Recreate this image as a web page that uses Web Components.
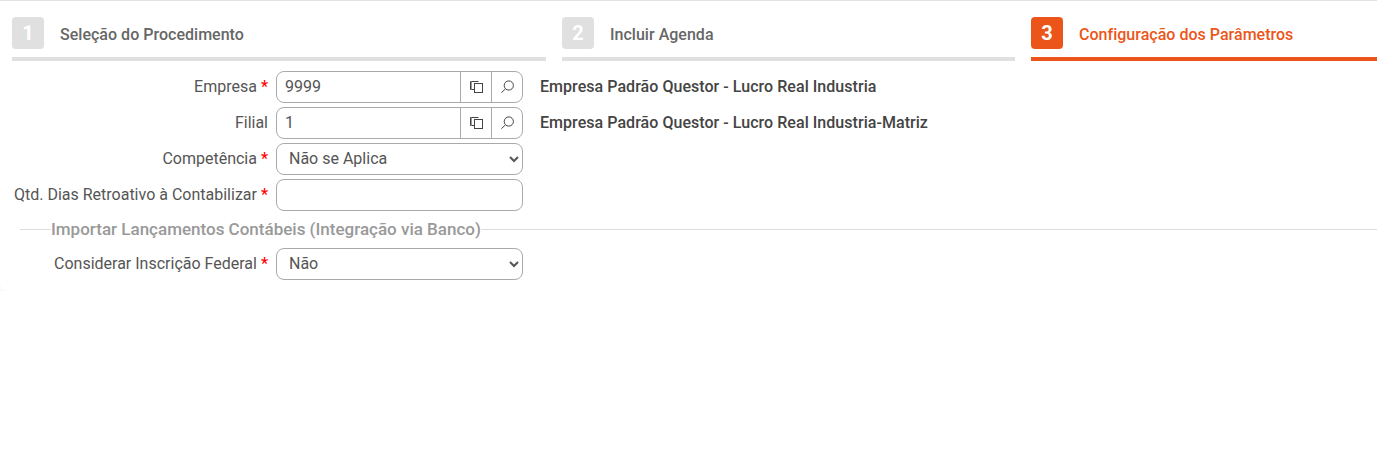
<!DOCTYPE html>
<html lang="pt-BR">
<head>
<meta charset="utf-8">
<title>Configuração dos Parâmetros</title>
<style>
	html, body { margin: 0; background: #fff; }
	body { font-family: Roboto, "Liberation Sans", sans-serif; color: #555; }
</style>
</head>
<body>
<wizard-panel>
	<wizard-steps>
		<wizard-step number="1" style="flex: 534 0 0">Seleção do Procedimento</wizard-step>
		<wizard-step number="2" style="flex: 453 0 0">Incluir Agenda</wizard-step>
		<wizard-step number="3" active style="flex: 346 0 0">Configuração dos Parâmetros</wizard-step>
	</wizard-steps>
	<form-row label="Empresa" required>
		<lookup-field value="9999"></lookup-field>
		<span slot="info">Empresa Padrão Questor - Lucro Real Industria</span>
	</form-row>
	<form-row label="Filial">
		<lookup-field value="1"></lookup-field>
		<span slot="info">Empresa Padrão Questor - Lucro Real Industria-Matriz</span>
	</form-row>
	<form-row label="Competência" required>
		<select-field value="Não se Aplica"></select-field>
	</form-row>
	<form-row label="Qtd. Dias Retroativo à Contabilizar" required>
		<text-field></text-field>
	</form-row>
	<section-title>Importar Lançamentos Contábeis (Integração via Banco)</section-title>
	<form-row label="Considerar Inscrição Federal" required>
		<select-field value="Não"></select-field>
	</form-row>
</wizard-panel>

<script>
const fieldBox = `
	box-sizing: border-box;
	height: 32px;
	border: 1px solid #aaa;
	border-radius: 8px;
	background: #fff;
	color: #555;
	font: 16px Roboto, "Liberation Sans", sans-serif;
`;

customElements.define('wizard-panel', class extends HTMLElement {
	constructor() {
		super();
		this.attachShadow({ mode: 'open' }).innerHTML = `
			<style>
				:host {
					display: flex;
					flex-direction: column;
					box-sizing: border-box;
					height: 291px;
					border-top: 1px solid #e2e2e2;
					border-radius: 0 0 0 8px;
					box-shadow: 0 3px 4px rgba(0, 0, 0, .035);
				}
			</style>
			<slot></slot>
		`;
	}
});

customElements.define('wizard-steps', class extends HTMLElement {
	constructor() {
		super();
		this.attachShadow({ mode: 'open' }).innerHTML = `
			<style>
				:host {
					display: flex;
					gap: 16px;
					padding: 16px 0 0 12px;
					margin-bottom: 10px;
				}
			</style>
			<slot></slot>
		`;
	}
});

customElements.define('wizard-step', class extends HTMLElement {
	constructor() {
		super();
		this.attachShadow({ mode: 'open' }).innerHTML = `
			<style>
				:host {
					display: flex;
					align-items: center;
					gap: 16px;
					box-sizing: border-box;
					height: 44px;
					padding-bottom: 8px;
					border-bottom: 4px solid #e0e0e0;
					color: #666;
					font-size: 16px;
					font-weight: 500;
				}
				:host([active]) {
					border-bottom-color: #ec5519;
					color: #ec5519;
				}
				.badge {
					display: flex;
					align-items: center;
					justify-content: center;
					width: 32px;
					height: 32px;
					border-radius: 4px;
					background: #e0e0e0;
					color: #fff;
					font-size: 20px;
					font-weight: 700;
				}
				:host([active]) .badge {
					background: #ec5519;
				}
				.title {
					padding-top: 2px;
					letter-spacing: .02px;
				}
			</style>
			<span class="badge">${this.getAttribute('number')}</span>
			<span class="title"><slot></slot></span>
		`;
	}
});

customElements.define('form-row', class extends HTMLElement {
	constructor() {
		super();
		const required = this.hasAttribute('required') ? '<span class="req">*</span>' : '';
		this.attachShadow({ mode: 'open' }).innerHTML = `
			<style>
				:host {
					display: grid;
					grid-template-columns: 268px 247px auto;
					column-gap: 8px;
					align-items: center;
					height: 32px;
					margin-bottom: 4px;
					font-size: 16px;
					color: #555;
				}
				.label {
					padding-bottom: 2px;
					text-align: right;
					white-space: nowrap;
				}
				.req {
					color: #f00;
					font-weight: 500;
				}
				.info {
					padding: 0 0 2px 9px;
					color: #444;
					font-size: 16px;
					font-weight: 500;
					letter-spacing: .045px;
					white-space: nowrap;
				}
			</style>
			<span class="label">${this.getAttribute('label')} ${required}</span>
			<slot></slot>
			<span class="info"><slot name="info"></slot></span>
		`;
	}
});

customElements.define('lookup-field', class extends HTMLElement {
	constructor() {
		super();
		this.attachShadow({ mode: 'open' }).innerHTML = `
			<style>
				:host {
					display: flex;
					${fieldBox}
				}
				input {
					flex: 1;
					min-width: 0;
					border: 0;
					outline: 0;
					padding: 0 8px 2px;
					background: none;
					color: inherit;
					font: inherit;
				}
				button {
					display: flex;
					align-items: center;
					justify-content: center;
					width: 31px;
					padding: 0;
					border: 0;
					border-left: 1px solid #aaa;
					background: none;
					color: #444;
				}
				svg { display: block; }
			</style>
			<input value="${this.getAttribute('value')}">
			<button title="Copiar">
				<svg width="14" height="14" viewBox="0 0 14 14" fill="none" stroke="currentColor" stroke-width="1">
					<path d="M9.5 1.5H1.5V9.5H5.5"/>
					<path d="M2.5 1.5V9.5" stroke="#999"/>
					<rect x="5.5" y="3.5" width="8" height="9"/>
				</svg>
			</button>
			<button title="Pesquisar">
				<svg width="14" height="14" viewBox="0 0 14 14" fill="none" stroke="currentColor" stroke-width="1">
					<circle cx="8.8" cy="5.5" r="4.6"/>
					<path d="M5.3 9 1.4 12.7"/>
				</svg>
			</button>
		`;
	}
});

customElements.define('select-field', class extends HTMLElement {
	constructor() {
		super();
		this.attachShadow({ mode: 'open' }).innerHTML = `
			<style>
				:host { display: block; }
				select {
					display: block;
					width: 100%;
					padding: 0 4px 2px 8px;
					outline: 0;
					${fieldBox}
				}
			</style>
			<select><option>${this.getAttribute('value')}</option></select>
		`;
	}
});

customElements.define('text-field', class extends HTMLElement {
	constructor() {
		super();
		this.attachShadow({ mode: 'open' }).innerHTML = `
			<style>
				:host { display: block; }
				input {
					display: block;
					width: 100%;
					padding: 0 8px;
					outline: 0;
					${fieldBox}
				}
			</style>
			<input type="text">
		`;
	}
});

customElements.define('section-title', class extends HTMLElement {
	constructor() {
		super();
		this.attachShadow({ mode: 'open' }).innerHTML = `
			<style>
				:host {
					display: flex;
					align-items: center;
					height: 28px;
					margin: 0 0 5px 20px;
					color: #999;
					font-size: 17px;
					font-weight: 500;
				}
				:host::before {
					content: '';
					width: 31px;
					border-top: 1px solid #ddd;
				}
				:host::after {
					content: '';
					flex: 1;
					border-top: 1px solid #ddd;
				}
			</style>
			<slot></slot>
		`;
	}
});
</script>
</body>
</html>
